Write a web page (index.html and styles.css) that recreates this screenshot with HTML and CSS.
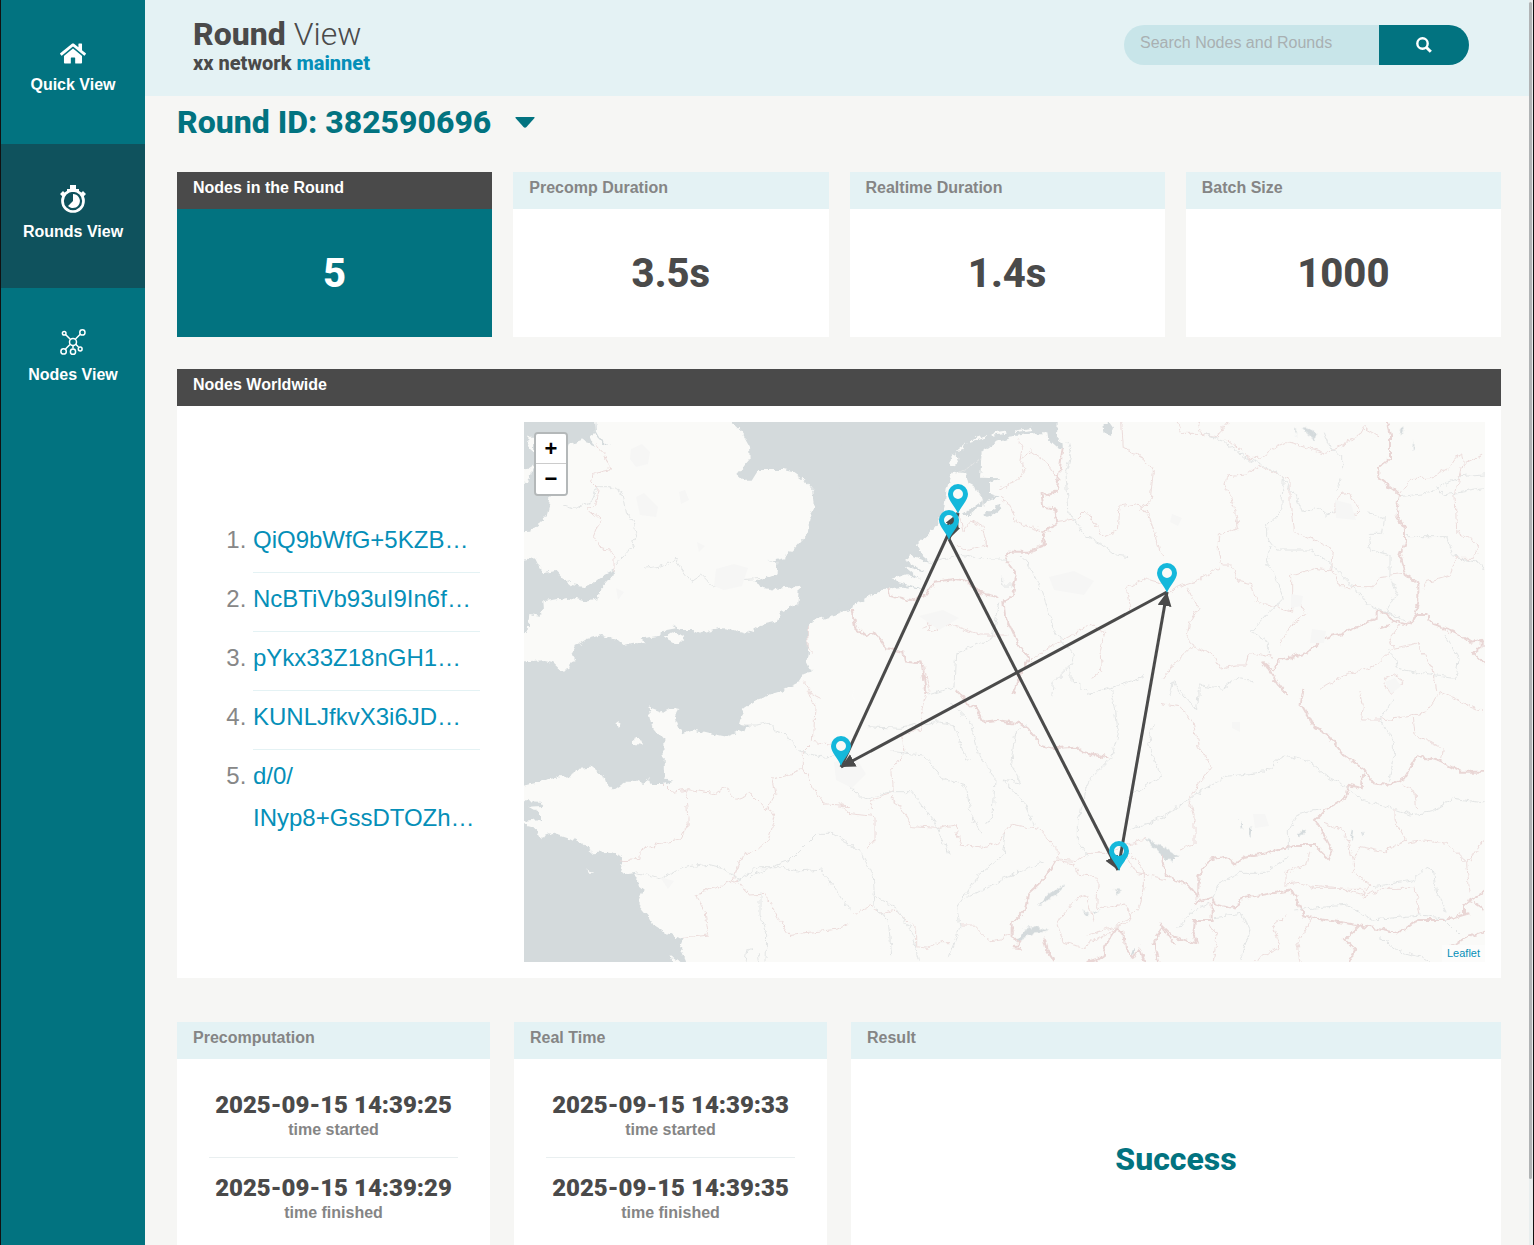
FILE: index.html
```html
<!DOCTYPE html>
<html lang="en">
<head>
<meta charset="utf-8">
<meta name="viewport" content="width=device-width, initial-scale=1">
<title>Round View - xx network</title>
<link rel="stylesheet" href="styles.css">
</head>
<body>
<div class="app">
  <nav class="sidebar" aria-label="Main">
    <a class="nav-item" href="#quick">
      <svg class="icon-home" viewBox="0 0 576 512" aria-hidden="true"><path fill="currentColor" d="M488 312.7V456c0 13.3-10.7 24-24 24H348c-6.600 0-12-5.400-12-12V356c0-6.600-5.400-12-12-12h-72c-6.600 0-12 5.400-12 12v112c0 6.600-5.400 12-12 12H112c-13.300 0-24-10.700-24-24V312.700c0-3.600 1.600-7 4.400-9.300l188-154.800c4.400-3.600 10.800-3.600 15.300 0l188 154.800c2.700 2.300 4.300 5.700 4.300 9.300zm83.600-60.900L488 182.900V44.400c0-6.600-5.400-12-12-12h-56c-6.600 0-12 5.400-12 12V117l-89.500-73.700c-17.700-14.600-43.300-14.600-61 0L4.400 251.800c-5.100 4.200-5.800 11.800-1.600 16.900l25.500 31c4.200 5.100 11.800 5.800 16.900 1.600l235.200-193.700c4.400-3.600 10.800-3.600 15.300 0l235.200 193.700c5.100 4.200 12.700 3.500 16.900-1.600l25.500-31c4.200-5.200 3.400-12.700-1.700-16.900z"/></svg>
      <span>Quick View</span>
    </a>
    <a class="nav-item active" href="#rounds" aria-current="page">
      <svg class="icon-watch" viewBox="0 0 26 28" aria-hidden="true">
        <path fill="currentColor" d="M10 0h6v4h3v3H7V4h3zM0 9l3-3 3 3-3 3zM26 9l-3-3-3 3 3 3z"/>
        <path fill="currentColor" d="M13 9a7 7 0 1 1-5 12l5-5z"/>
        <circle cx="13" cy="16" r="10.500" fill="none" stroke="currentColor" stroke-width="2.700"/>
      </svg>
      <span>Rounds View</span>
    </a>
    <a class="nav-item" href="#nodes">
      <svg class="icon-nodes" viewBox="0 0 26 27" aria-hidden="true">
        <g fill="none" stroke="currentColor" stroke-width="1.500">
          <path d="M5.500 5.500l4.800 4.800M20.500 5l-5 5M10 15.500l-4.500 4.500M13 16.500v3M15.500 15l3 3"/>
          <circle cx="13" cy="13" r="3.500"/><circle cx="4.200" cy="4.200" r="1.800"/><circle cx="22.400" cy="3.400" r="2.600"/>
          <circle cx="3.600" cy="22.400" r="2.700"/><circle cx="13" cy="22.700" r="2.600"/><circle cx="20.200" cy="20" r="1.900"/>
        </g>
      </svg>
      <span>Nodes View</span>
    </a>
  </nav>

  <main class="main">
    <header class="topbar">
      <div class="titles">
        <h1>Round <span>View</span></h1>
        <p>xx network <a href="#mainnet">mainnet</a></p>
      </div>
      <form class="search" role="search">
        <input type="search" placeholder="Search Nodes and Rounds" aria-label="Search Nodes and Rounds">
        <button type="button" aria-label="Search">
          <svg viewBox="0 0 16 16" aria-hidden="true"><g fill="none" stroke="currentColor"><circle cx="6.500" cy="6.500" r="5.200" stroke-width="2.400"/><path d="M10.500 10.500l4.300 4.300" stroke-width="3"/></g></svg>
        </button>
      </form>
    </header>

    <div class="content">
      <button class="round-picker" type="button">Round ID: 382590696
        <svg viewBox="0 0 20 11" aria-hidden="true"><path fill="currentColor" d="M1 0h18q1 0 .5 1l-8 9q-1.500 1.500-3 0l-8-9q-.5-1 .5-1z"/></svg>
      </button>

      <section class="stats">
        <article class="card card-strong"><h2>Nodes in the Round</h2><p>5</p></article>
        <article class="card"><h2>Precomp Duration</h2><p>3.5s</p></article>
        <article class="card"><h2>Realtime Duration</h2><p>1.4s</p></article>
        <article class="card"><h2>Batch Size</h2><p>1000</p></article>
      </section>

      <section class="card world">
        <h2>Nodes Worldwide</h2>
        <div class="world-body">
          <ol class="node-list">
            <li><a href="#n1">QiQ9bWfG+5KZB…</a></li>
            <li><a href="#n2">NcBTiVb93uI9In6f…</a></li>
            <li><a href="#n3">pYkx33Z18nGH1…</a></li>
            <li><a href="#n4">KUNLJfkvX3i6JD…</a></li>
            <li><a href="#n5">d/0/<br>INyp8+GssDTOZh…</a></li>
          </ol>
          <div class="map">
            <svg class="map-canvas" viewBox="0 0 961 540" preserveAspectRatio="xMidYMid slice" role="img" aria-label="Map of the nodes in the round">
              <defs>
                <filter id="rough" filterUnits="userSpaceOnUse" x="-10" y="-10" width="981" height="560" color-interpolation-filters="sRGB">
                  <feTurbulence type="fractalNoise" baseFrequency="0.140" numOctaves="3" seed="4"/>
                  <feDisplacementMap in="SourceGraphic" scale="7" xChannelSelector="R" yChannelSelector="G"/>
                </filter>
                <marker id="head" markerUnits="userSpaceOnUse" markerWidth="16" markerHeight="16" refX="14" refY="7" orient="auto"><path d="M0 0L14 7L0 14z" fill="#4a4a4a"/></marker>
                <g id="pin"><path fill="#15b8db" fill-rule="evenodd" d="M0 0C-2-7-10-13-10-20a10 10 0 0 1 20 0C10-13 2-7 0 0zM0-25a5 5 0 1 0 0 10a5 5 0 1 0 0-10z"/></g>
              </defs>
              <rect x="-10" y="-10" width="981" height="560" fill="#fafaf8"/>
              <g filter="url(#rough)">
                <g transform="translate(-4 -7) scale(.33333)">
                  <path class="sea" d="M-20-10H990V850H-20z"/>
                  <path class="land" d="M222-20L228 50 240 72 270 90 248 86 232 70 225 55 210 65 222 92 205 85 190 75 148 90 100 120 92 245 88 270 80 300 60 325 30 347-20 350V437L45 430 60 460 65 475 110 468 130 490 155 510 190 516 220 505 250 480 285 462 280 480 240 525 235 552 200 560 150 548 70 558 72 585 60 602 28 597 22 650-20 657V743L45 740 75 738 100 745 125 768 145 765 150 740 165 735 158 715 170 690 180 685 200 672 245 660 290 672 310 690 340 683 378 688 365 670 420 662 440 645 468 640 455 628 485 645 520 645 540 655 600 638 640 645 680 656 720 630 775 618 780 592 835 568 840 515 760 522 720 512 700 500 735 488 770 475 772 440 745 440 790 430 820 405 850 370 862 358 868 320 884 270 880 225 860 200 820 172 790 165 715 165 695 197 675 197 652 177 692 130 690 95 665 50 632 21 620-20zM22 65L42 65 42 112 22 95zM-20 175L42 155 22 205-20 198zM432 670L460 652 497 665 470 690z"/>
                  <path class="land" d="M1000 582L930 603 880 615 862 630 865 700 860 740 875 770 850 775 830 805 790 825 750 845 1000 850z"/>
                </g>
                <g transform="translate(-4 268) scale(.33333)">
                  <path class="sea" d="M-20 0H800V840H-20z"/>
                  <path class="land" d="M800-2L715 25 670 55 657 100 690 108 660 125 620 140 570 130 520 118 485 130 465 85 475 60 450 55 430 68 385 52 400 115 430 150 432 265 460 272 430 282 395 282 385 265 370 285 350 275 320 275 280 303 258 280 250 255 225 235 165 240 155 258 120 262 100 265-20 295V332L60 335 70 348 25 350 60 370 60 388-20 395 40 410 60 445 100 428 150 445 190 465 220 490 270 485 300 497 310 515 300 545 320 555 350 552 348 580 372 600 355 640 385 675 400 705 440 730 490 745 480 770 515 850H1000V-2zM283 103l12-9 7 4-8 12zM340 150l10-4 18 6v12l-28-2zM203 538l20 10-18 0zM455 798l20 14-10 30z"/>
                </g>
                <g transform="translate(316 -7) scale(.33333)">
                  <path class="sea" d="M0-10H655L650 78 670 85 672 102 650 97 625 75 622 55 580 55 510 65 460 85 425 110 422 165 420 188 480 190 450 202 450 238 480 248 440 258 390 300 368 300 385 288 430 255 405 215 385 205 378 175 340 170 330 185 320 220 310 300 270 350 228 390 235 412 280 450 215 420 195 435 260 472 190 452 240 492 200 474 155 488 180 505 262 528 190 515 130 522 80 550 30 582-5 590z"/>
                  <path class="land" d="M330 155l3-30 20-10 2 18-15 24zM350 108l30-24-14 22zM390 75l48-15-2 8-46 12zM455 56l40-6 2 6-42 6zM525 47l50-9-2 7-46 7z"/>
                  <path class="water" d="M790 35l15-14 14 20-6 22-18-8zM440 305l40-20 5-20-14 8-40 28z"/>
                  <path class="fine" d="M350 175l70-40M400 215l25 30 5 30"/>
                </g>
                <g transform="translate(316 268) scale(.33333)" class="water">
                  <path d="M528 755l22-35 40-12 38 16-48 4-35 22zM592 648l38-40 42-22-28 34zM915 448l55 20 32 24v22l-36-14zM728 660l20 12-6 4zM755 668l28-10-18 14zM820 600l20 4-8 8zM870 800l14-24 2 14z"/>
                </g>
                <g transform="translate(636 -7) scale(.33333)" class="water">
                  <path d="M425 40l20 0 25 25-5 10-20-16zM403 38l4 2v22l-4-6zM720 40l8-8 4 16-12 14zM755 90l5-12v20l-4 10z"/>
                </g>
                <g transform="translate(636 268) scale(.33333)" class="water">
                  <path d="M0 476l20 2 34 20-30 12L0 498zM413 434l18-14 4 10-16 8zM240 392l5 0 2 24-5-4zM268 410l6 0-2 30-5-6zM575 420l4 0-3 28-6-2zM606 424l5 0v18z"/>
                </g>

                <g transform="translate(-4 -7) scale(.33333)">
                  <path class="fine" d="M135 270l30 10 50-20 15-45 40 0 40 25 10 55 20 30 8 45-25 40-35 40M370 450l10 10 55-10 30-20 20 30 30 40 30-20 35 35 60-20 90-5"/>
                  <path class="border" d="M225 85l30 35 15 45-50 10-5 25 20 20-10 50-25 10 40 35-20 50 20 35 30 5 12 25v38M862 630l3 70 12 10M850 800l25 35 30 15"/>
                </g>
                <g transform="translate(-4 268) scale(.33333)">
                  <path class="border" d="M432 282l25 25 50-8 80 12 25-18 35 35 45-18 40 42 25 10M497 300l8 105-25 45-60 10-60 20 0 28-60 5M865 0l20 50-5 105-30 30 0 50-35 15-60 15 10 50-20 35 20 30-20 70-45 40-30 0-30 80-10 5M885 155l50 8M850 235l30 60 35 50 75 5M655 570l-90 30-40 15 30 50 10 70-75 10M655 575l30 40 50-2 40 70 35 50 140-15 35-15"/>
                  <path class="fine" d="M350 548l75 20 60-35 80-10 40 10 50 35 60-35 60 0 60 10 65-5 40 50 50 75M690 560l70-30 50-20 80-80 50 0 50 30M720 610l0 65 20 60-2 80M675 816l5-35 15-5 20 20 5 30M670 105l40 0 40-8 15 25 30 10 20 25 35 30 60 15 40-5"/>
                </g>
                <g transform="translate(316 -7) scale(.33333)">
                  <path class="border" d="M530 70l15 30-5 40 20 20-35 40-50 20M545 130l30-22 40 30 35 45M480 248l30 20 20 55 60 20 40 10M355 290l15 60 20-35 35 15 15 60-70 15-20-15M245 640l60-20 120 40 80 0M265 620l25 5v20l-20 5zM650 320l60-10 25-25 55 80 45-20 5-70 60-10 30 45 30 100 10 20M845 20l5 80 60 30 30 40-10 90-35 30M1000 530l10-10M570 740l60-45 60-30 60-40 45 25-15 60 5 60-30 20M870 590l-10-70 50-30 70 20M210 740l40 10 20 80"/>
                  <path class="border thick" d="M668 100l-18 130-48 10 5 35 35 5 8 50-40 20 5 40-50 20-60 0-5 30 30 40-15 60-25 20 5 40 20 45 20 45 30 40-30 60-15 50M145 520l5 20 60 15 40-10 35-45 60-8 30 5 40 35 60 15M35 585l10 50 35 30 20-15 40 50 50 10 5 30 50 5 15 95"/>
                  <path class="fine" d="M680 80l15 25-18 60 10 130 50 70 45 20 45 35 40 5M275 440l80-20 100 15 50 0M540 420l35 40 35 80 30 100 60 80-15 60 60 55 80-20 90-30M485 480v30l35 0M480 560l-25 110-105 45-5 100-80 25M700 745l-60 60-5 40"/>
                </g>
                <g transform="translate(316 268) scale(.33333)">
                  <path class="border thick" d="M350 0l30 40 25 10 25 45 40-5 70 10 20 15 45 50 40 10 60-5 30 20 70 15M650 510l-30 50-55 50-10 50-40 40 0 40 25 15-20 20 25 2M610 740l10 40 20 30M740 816l50-15 10-40 30-45 20 10 5 50 25 30 20-30 20 50 40 10-20-80 30-40 35 50"/>
                  <path class="border" d="M260 0l-15 60 0 55-60 20 10 50-40 50 5 70-60 20-10 35M0 340l25 30 80 10 0 70-25 30M150 325l30 20 35 65 80 5 50-10 20 60 60 10 50-15 40-60 80 15 55 60 5 35 55 5 30-25 60 0 60-25 60-20M640 512l60 10 15 30 60 10-5 90 30 0 60-10 10 50-140 80-60-15-20-60 60-70 30-10 20 80M860 500l30 50 90 20M850 480l60 50 0 60-10 60-70 60-90 25M360 705l40 0 50 50 35-5 35-25M40 670l50-20 35 20 40-10 65 60 0 50 35 5 40-20 25 0"/>
                  <path class="fine" d="M80 110l100 5 110-20 50 10 40 105 10 0M330 40l65 60 20 90 50 75-5 100-20 40M555 100l-28 30-15 90 30 60-50-10 60 70 30 65M15 270l50 55 90-20 60 0 70 90 40 100M155 185l95 10 60 70 70 25 10 80 30 60M0 450l60 30 40 80 5 90 40 45 10 100M100 615l70 40 50 80 15 80M500 420l-10 70-80 70-30 50-30 40 10 60-35 90M610 515l-120 50-70 40-40 20M720 380l15-80 20-40 60-60 20-70-10-80-10-50M715 380l0 80 30 40M940 100l-15 60 40 100-100 60M870 420l80-30 60-40"/>
                </g>
                <g transform="translate(636 -7) scale(.33333)">
                  <path class="border" d="M110 20l20 45M50 20l15 35 55 0 50 10 35-45M200 75l70 55 30 0 40-30 40-20 60 15 60 20 40-20 60-40 10-20 45 25M300 150l-40 30-60 5-5 20 30 70 10 65-60 20 0 60 10 30 30 0 20 50 40 10 15 50 40 10 60 20 20-35 30 40-40 30-40 60M300 150l60 30 30 10 0 70 10 85 60 30 60 30-5 60-50-5-70 20 0 110M510 460l30 55 100 0 20-30 70-10M520 290l15-50 30-5 35 50-10 10zM715 240l40-50 50 0 60-30 20-30 20-10 5 30 60-30M905 150l-20 90 5 110 70 40-20 40-50 0-20 50-70 20-10 20M175 460l-60 35-60 20-35 20M80 520l35 60-25 40-10 50 30 30 50 20 20 40 50-10 30 0 10-40 70 20M100 690l-60 60-30 40M720 630l-30 40 10 30-50 50-100 30-70 40M700 700l70-15 50 80 10 60M670 790l30-10 30 20-40 35z"/>
                  <path class="border thick" d="M680 20l10 40 0 70-35 30 0 30 65 50-10 60 25 40 0 40-15 40 20 60 35 25 0 60-15 50-20 15-50-15-10-20-30-5 0 20-90 40-70 20-50 45-80 20-20 30-30-25 40 60 30 40M760 600h40l20 30 60 20 50 30 35-5 0 20-25 20 40 40M660 640l30-10"/>
                  <path class="fine" d="M130 55l60 20 60 50 50 20 70 40-5 100-45 50 0 30 30 40 100 0 60 40 60 60 60 70 80 30M370 190l35 50 20 50 50-10 25 20 30-15M620 290l50 20-5 45-40 0 5 50 60 15 0 60 20 50-30 60 60 30M490 50l20 50 35 20 0 40M540 190l-10 40M720 245l80-10 40-20 60-30 75-5M830 215l20 25 130-20M740 365l120 0 20 60 80 20 15 20M330 390l-10 60 20 20 30 80-50 50-45 50 50 30 0 40M685 700l30 60 90 20 80 10 10-60-40-70M120 840l0-30 70 10 40-30 50 10M30 840l10-40 20 40"/>
                </g>
                <g transform="translate(636 268) scale(.33333)">
                  <path class="border thick" d="M430 0l-8 40 40 70 40 25 50 60 60 45 30 40 40 5 50-20 40-70 70 20 60 30 70 0M610 250l-5 45-40-10-10 40-60 35-30 30 30 50 20 40-10 25-40-40-60 0-90 25-60 10-30 20-30-20-50 10-30 50 0 60-30-35-70-30-10-60M105 640l50-20 10 20 60 15 20-30 150-25 40 80 60 10 100 15 120 25 60-40 80 0 70-20M155 640l0 50-50 0-5 40 10 30-70-20-40-40M600 705l-45 45 30 30-20 40M975 605l-60 35 0 30M940 635l30 20M975 725l-60 20-50 30"/>
                  <path class="border" d="M0 40l60 10 40 50 15 70 40 60-30 40-35 55 15 60 0 80-45 15M85 330l20 70M120 560l-10 75M600 0l10 50-5 40 60 0 80-10 55-15 40-60 60 30 70 30M760 85l5 50 85 40-5 30M730 285l35 20 5 55M705 360l0 30 35 60-70 35-70-15-20 40-15-60-20-30-50-20M740 460l60-10 60 10 60 60 50-70M580 515l0 35 50 35-20 30-60-20-100-10M375 545l0 40 50-5 40 15 140 0 10 25 50-25 100 0 15 80M380 545l60-20 10-40M920 520l10 90M150 700l20 40-10 76M460 680l-50 80 10 56M380 675l-40 35 20 60-80 45"/>
                  <path class="fine" d="M0 390l50-35 45-35 100-60 120-15 60-50 70 20 60 50 45 20 40 30 30 20 50 10 80 30 70-10 60-40 100 15M385 480l0-60 30-50 70-15M155 630l20-50 60-30 80 0 70-50M640 590l120-20 40-40 20 10 10 70 30 60M400 660l160-15 80 45 140-15 70 10 50 50M165 680l80-10 25 50-30 90M50 720l50-60 50-20M660 740l50 40 100 30M685 275l15-60 0-60-40-65 40-60M60 0l50 60 5-60"/>
                </g>
              </g>
              <g class="towns">
                <path d="M107 27l11-5 8 8-2 12-12 3-6-8zM112 75l8-4 14 14-2 10-16-2zM192 147l18-5 14 4-6 18-18 4-10-4zM310 340l22-4 10 16-14 14-16-8zM525 155l25-6 20 10-10 14-30-5zM811 78l16 4 5 16-20-2zM729 392l12 0 4 12-14 2zM708 300l8 0 0 10-8-4zM648 92l10 4-4 8-8-4zM767 172l12 2-2 10-10 2zM788 207l14 2-2 12-14 0zM861 260l10-4 6 8-10 8zM395 194l24-6 16 8-20 12zM155 70l6-2 4 10-8 4zM173 120l8 4-6 6zM136 455l14 4-6 8zM92 166l8 4-6 8z"/>
              </g>
              <g class="route">
                <path d="M434 91L425 117"/><path d="M425 117L594 448"/><path d="M594 448L643 170"/><path d="M643 170L317 345"/><path d="M317 345L434 91"/>
              </g>
              <use href="#pin" x="434" y="92"/><use href="#pin" x="425" y="118"/><use href="#pin" x="643" y="171"/><use href="#pin" x="317" y="344"/><use href="#pin" x="595" y="449"/>
            </svg>
            <div class="zoom"><button type="button" aria-label="Zoom in">+</button><button type="button" aria-label="Zoom out">−</button></div>
            <a class="credit" href="#leaflet">Leaflet</a>
          </div>
        </div>
      </section>

      <section class="timing">
        <article class="card">
          <h2>Precomputation</h2>
          <dl><div><dd>2025-09-15 14:39:25</dd><dt>time started</dt></div><div><dd>2025-09-15 14:39:29</dd><dt>time finished</dt></div></dl>
        </article>
        <article class="card">
          <h2>Real Time</h2>
          <dl><div><dd>2025-09-15 14:39:33</dd><dt>time started</dt></div><div><dd>2025-09-15 14:39:35</dd><dt>time finished</dt></div></dl>
        </article>
        <article class="card result"><h2>Result</h2><p>Success</p></article>
      </section>
    </div>
  </main>
  <div class="scroll-track"><div class="scroll-thumb"></div></div>
</div>
</body>
</html>
```

FILE: styles.css
```css
* { box-sizing: border-box; }

body {
  margin: 0;
  background: #111;
  color: #4a4a4a;
  font: 16px/24px "Liberation Sans", Arial, sans-serif;
}

h1, h2, p, ol, dl, dd { margin: 0; }
a { color: #058fb8; text-decoration: none; }
button { border: 0; padding: 0; font: inherit; cursor: pointer; }
svg { display: block; }

.app {
  display: grid;
  grid-template-columns: 144px minmax(0, 1fr) 4px;
  height: 100vh;
  padding: 0 1px;
  overflow: hidden;
}

.sidebar { background: #027380; }
.nav-item {
  display: flex;
  flex-direction: column;
  align-items: center;
  gap: 7px;
  height: 144px;
  padding-top: 41px;
  color: #fff;
  font-weight: 700;
}
.nav-item.active { background: #0f525d; }
.icon-home { width: 26px; height: 25px; }
.icon-watch { width: 26px; height: 28px; }
.icon-nodes { width: 26px; height: 27px; }

.main { background: #f6f6f4; overflow: hidden; }

.topbar {
  display: flex;
  justify-content: space-between;
  align-items: flex-start;
  height: 96px;
  padding: 16px 60px 0 48px;
  background: #e4f2f4;
  font-family: Roboto, sans-serif;
}
.topbar h1 { font-size: 32px; line-height: 36px; font-weight: 800; }
.topbar h1 span { font-weight: 300; }
.topbar p { font-size: 20px; line-height: 22px; font-weight: 800; }

.search {
  display: flex;
  width: 345px;
  height: 40px;
  margin-top: 9px;
  border-radius: 20px;
  overflow: hidden;
}
.search input {
  flex: 1;
  min-width: 0;
  border: 0;
  padding: 0 16px 4px;
  background: #c8e5e9;
  font: 16px "Liberation Sans", Arial, sans-serif;
  appearance: none;
}
.search input::placeholder { color: #a9b0b2; }
.search button {
  display: grid;
  place-items: center;
  width: 90px;
  background: #027380;
  color: #fff;
}
.search svg { width: 16px; height: 16px; }

.content { padding: 0 28px 0 32px; }

.round-picker {
  display: flex;
  align-items: center;
  gap: 24px;
  height: 52px;
  margin-bottom: 24px;
  background: none;
  color: #027380;
  font: 800 32px/52px Roboto, sans-serif;
}
.round-picker svg { width: 20px; height: 11px; }

.card { background: #fff; }
.card h2 {
  height: 37px;
  padding: 4px 16px;
  background: #e4f2f4;
  color: #858585;
  font-size: 16px;
  line-height: 24px;
  font-weight: 700;
}

.stats {
  display: grid;
  grid-template-columns: repeat(4, 1fr);
  gap: 21px;
}
.stats p {
  padding: 41px 0 39px;
  font: 800 40px/48px Roboto, sans-serif;
  text-align: center;
}
.card-strong { background: #027380; color: #fff; }
.card-strong h2, .world h2 { background: #4a4a4a; color: #fff; }

.world { margin-top: 32px; }
.world-body {
  display: grid;
  grid-template-columns: 287px minmax(0, 1fr);
  gap: 44px;
  align-items: center;
  padding: 16px;
}
.node-list {
  margin-bottom: 20px;
  padding-left: 60px;
  color: #878787;
  font-size: 24px;
  line-height: 42px;
}
.node-list li { padding: 5px 0 11px; border-bottom: 1px solid #e4f2f4; }
.node-list li:last-child { border-bottom: 0; }

.map { position: relative; height: 540px; overflow: hidden; }
.map-canvas { width: 100%; height: 100%; }
.sea, .water { fill: #d4dadc; }
.land { fill: #fafaf8; }
.border { fill: none; stroke: #ecdcdb; stroke-width: 3px; }
.border.thick { stroke: #e9d6d5; stroke-width: 6px; }
.fine { fill: none; stroke: #e3e5e5; stroke-width: 3px; }
.towns { fill: #f6f6f5; }
.route path { fill: none; stroke: #4a4a4a; stroke-width: 3px; marker-end: url(#head); }

.zoom {
  position: absolute;
  top: 10px;
  left: 10px;
  border: 2px solid #b4b8b9;
  border-radius: 4px;
  overflow: hidden;
}
.zoom button {
  display: block;
  width: 30px;
  height: 30px;
  background: #fff;
  color: #000;
  font-size: 22px;
  line-height: 30px;
  font-weight: 700;
}
.zoom button:first-child { border-bottom: 1px solid #ccc; }
.credit {
  position: absolute;
  right: 0;
  bottom: 0;
  padding: 0 5px;
  background: #fcfcfb;
  font-size: 11px;
  line-height: 17px;
}

.timing {
  display: grid;
  grid-template-columns: 313fr 313fr 650fr;
  gap: 24px;
  margin-top: 44px;
}
.timing dl { padding: 32px 32px 35px; text-align: center; }
.timing dl div { display: flex; flex-direction: column; }
.timing dl div + div { margin-top: 17px; padding-top: 16px; border-top: 1px solid #e9eff0; }
.timing dd { font: 900 24px/28px Roboto, sans-serif; }
.timing dt { color: #858585; line-height: 21px; font-weight: 700; }
.result { display: flex; flex-direction: column; }
.result p {
  display: grid;
  flex: 1;
  place-items: center;
  color: #027380;
  font: 800 32px/36px Roboto, sans-serif;
}

.scroll-track { background: #e9eeee; padding-top: 2px; }
.scroll-thumb { width: 3px; height: 1177px; border-radius: 2px; background: #b1b4b5; }
```
